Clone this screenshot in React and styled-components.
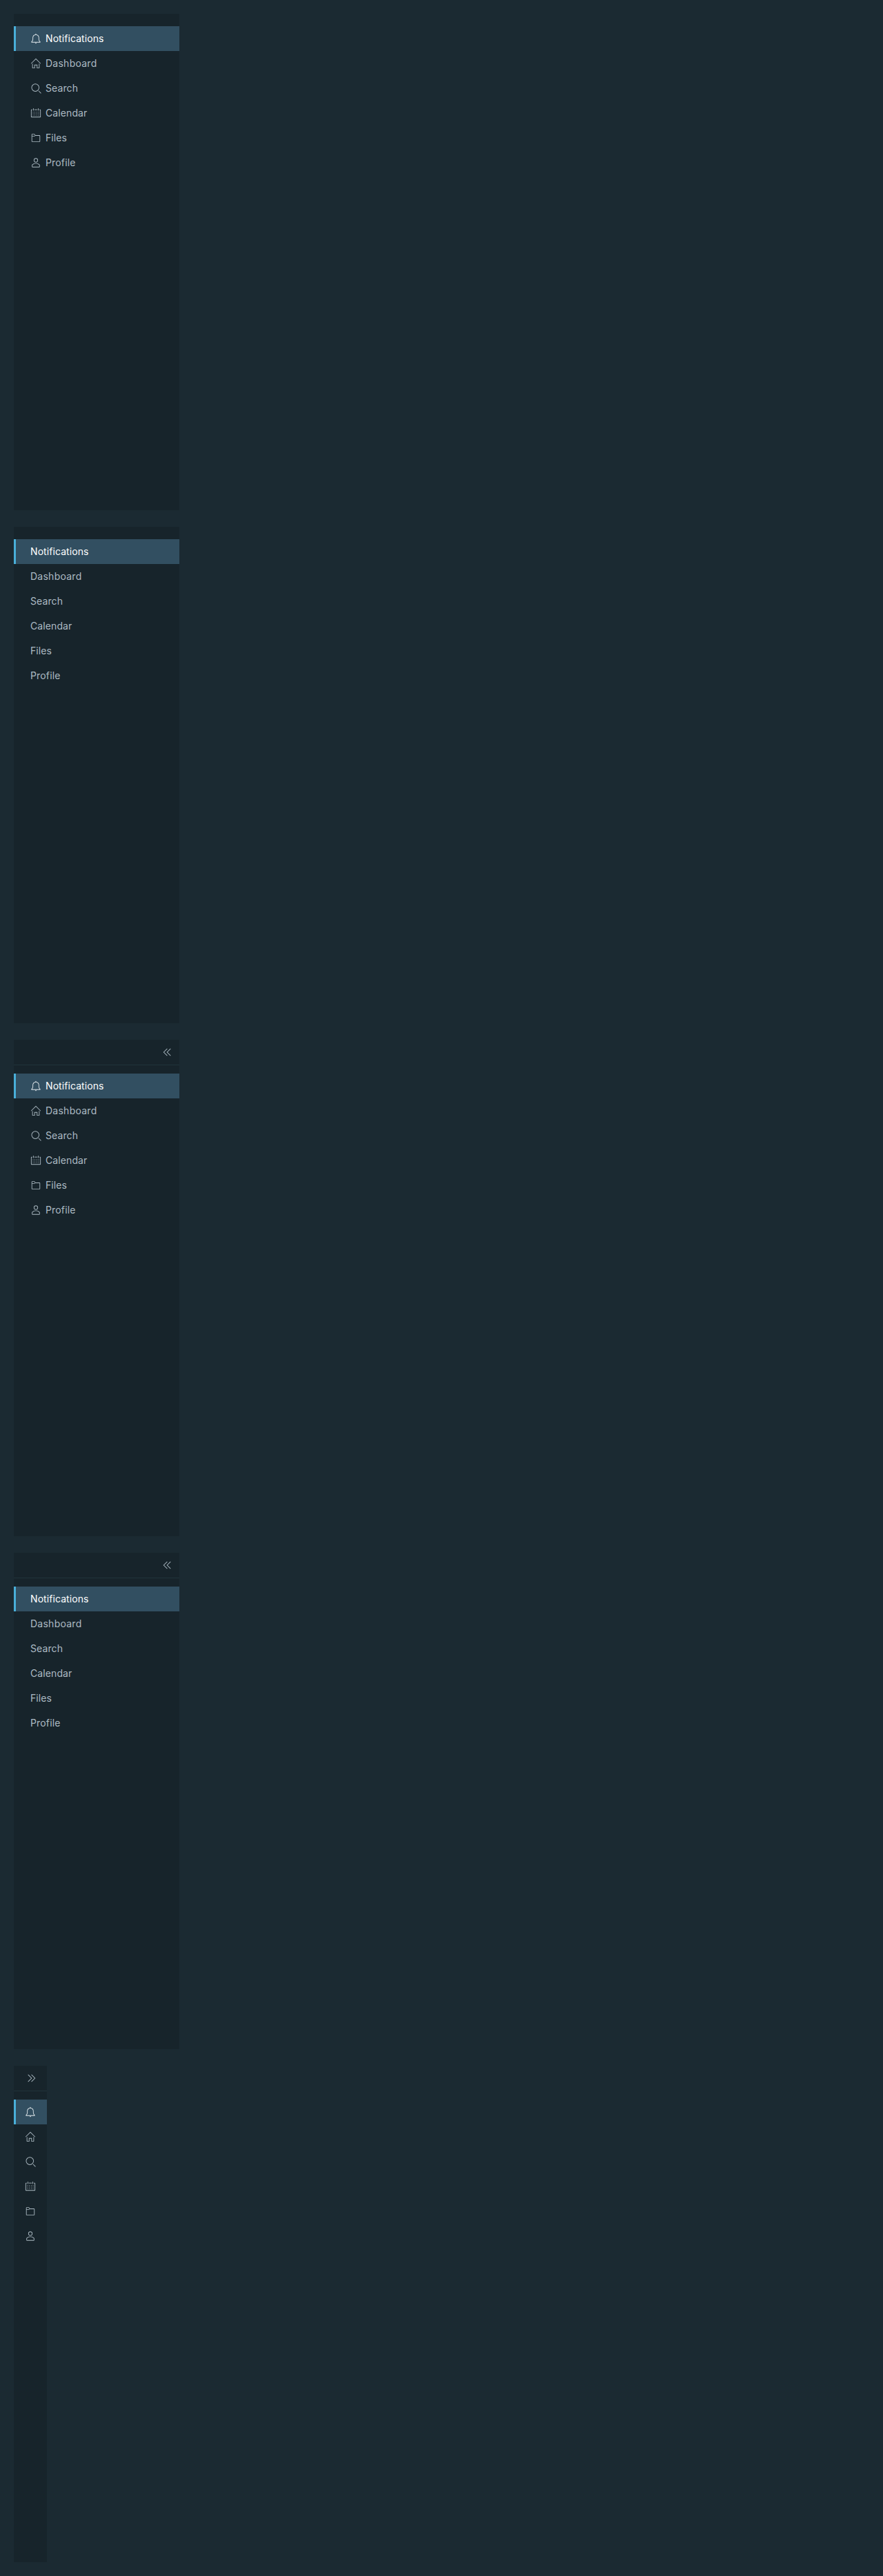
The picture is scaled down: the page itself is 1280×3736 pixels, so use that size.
import React from "react";
import styled, { createGlobalStyle } from "styled-components";

const GlobalStyle = createGlobalStyle`
  body {
    margin: 0;
    background: #1b2a32;
    font-family: Inter, "Open Sans", sans-serif;
  }
`;

const Page = styled.main`
  display: flex;
  flex-direction: column;
  align-items: flex-start;
  gap: 24px;
  padding: 20px;
`;

const Nav = styled.nav`
  box-sizing: border-box;
  display: flex;
  flex-direction: column;
  width: ${(p) => (p.$collapsed ? 48 : 240)}px;
  height: 720px;
  background: #17242b;
`;

const Trigger = styled.button`
  box-sizing: border-box;
  display: flex;
  align-items: center;
  justify-content: flex-end;
  flex: none;
  height: 37px;
  margin: 0;
  padding: 0 ${(p) => (p.$collapsed ? 14 : 10)}px 0 0;
  border: 0;
  border-bottom: 1px solid #21333b;
  background: transparent;
  color: #adbbc4;
`;

const List = styled.ul`
  list-style: none;
  margin: 0;
  padding: ${(p) => (p.$collapsible ? 12 : 18)}px 0 0;
`;

const Item = styled.li`
  box-sizing: border-box;
  display: flex;
  align-items: center;
  gap: 6px;
  height: 36px;
  padding-left: ${(p) => (p.$collapsed ? 13 : 21)}px;
  border-left: 3px solid ${(p) => (p.$active ? "#49afd9" : "transparent")};
  background: ${(p) => (p.$active ? "#324f61" : "transparent")};
  color: ${(p) => (p.$active ? "#ffffff" : "#adbbc4")};
`;

const Label = styled.span`
  font-size: 14px;
  font-weight: 400;
  line-height: 24px;
  letter-spacing: ${(p) => p.$tracking}px;
  white-space: nowrap;
`;

const Icon = styled.svg`
  display: block;
  flex: none;
  width: 16px;
  height: 16px;
  fill: ${(p) => (p.$active ? "#e3eaee" : "currentColor")};
  transform: rotate(${(p) => p.$turn || 0}deg);
`;

const shapes = {
  bell: (
    <>
      <path d="M32.51,27.83A14.4,14.4,0,0,1,30,24.9a12.63,12.63,0,0,1-1.35-4.81V15.15A10.81,10.81,0,0,0,19.21,4.4V3.11a1.33,1.33,0,1,0-2.67,0V4.42A10.81,10.81,0,0,0,7.21,15.15v4.94A12.63,12.63,0,0,1,5.86,24.9a14.4,14.4,0,0,1-2.47,2.93,1,1,0,0,0-.34.75v1.36a1,1,0,0,0,1,1h27.8a1,1,0,0,0,1-1V28.58A1,1,0,0,0,32.51,27.83ZM5.13,28.94a16.17,16.17,0,0,0,2.44-3,14.24,14.24,0,0,0,1.65-5.85V15.15a8.74,8.74,0,1,1,17.47,0v4.94a14.24,14.24,0,0,0,1.65,5.85,16.17,16.17,0,0,0,2.44,3Z" />
      <path d="M18,34.28A2.67,2.67,0,0,0,20.58,32H15.32A2.67,2.67,0,0,0,18,34.28Z" />
    </>
  ),
  home: (
    <>
      <path d="M33.71,17.29l-15-15a1,1,0,0,0-1.41,0l-15,15a1,1,0,0,0,1.41,1.41L18,4.41,32.29,18.71a1,1,0,0,0,1.41-1.41Z" />
      <path d="M28,32h-5V22H13V32H8V18L6,20V32a2,2,0,0,0,2,2h7V24h6V34h7a2,2,0,0,0,2-2V19.76l-2-2Z" />
    </>
  ),
  search: (
    <>
      <path d="M16.33,5.05A10.95,10.95,0,1,1,5.39,16,11,11,0,0,1,16.33,5.05m0-2.05a13,13,0,1,0,13,13,13,13,0,0,0-13-13Z" />
      <path d="M35,33.29l-7.37-7.42-1.42,1.41,7.37,7.42A1,1,0,1,0,35,33.29Z" />
    </>
  ),
  calendar: (
    <>
      <path d="M32.25,6H29V8h3V30H4V8H7V6H3.75A1.78,1.78,0,0,0,2,7.81V30.19A1.78,1.78,0,0,0,3.75,32h28.5A1.78,1.78,0,0,0,34,30.19V7.81A1.78,1.78,0,0,0,32.25,6Z" />
      {[14, 19, 24].map((y) =>
        [8, 14, 20, 26].map((x) => <rect key={`${x}-${y}`} x={x} y={y} width="2" height="2" />)
      )}
      <path d="M10,10a1,1,0,0,0,1-1V3A1,1,0,0,0,9,3V9A1,1,0,0,0,10,10Z" />
      <path d="M26,10a1,1,0,0,0,1-1V3a1,1,0,0,0-2,0V9A1,1,0,0,0,26,10Z" />
      <rect x="13" y="6" width="10" height="2" />
    </>
  ),
  folder: (
    <path d="M30,9H16.42L14.11,5.82A2,2,0,0,0,12.49,5H6A2,2,0,0,0,4,7V29a2,2,0,0,0,2,2H30a2,2,0,0,0,2-2V11A2,2,0,0,0,30,9Zm0,20H6V13h7.31a2,2,0,0,0,2-2H6V7h6.49l2.61,3.59a1,1,0,0,0,.81.41H30Z" />
  ),
  user: (
    <>
      <path d="M18,17a7,7,0,1,0-7-7A7,7,0,0,0,18,17ZM18,5a5,5,0,1,1-5,5A5,5,0,0,1,18,5Z" />
      <path d="M30.47,24.37a17.16,17.16,0,0,0-24.93,0A2,2,0,0,0,5,25.74V31a2,2,0,0,0,2,2H29a2,2,0,0,0,2-2V25.74A2,2,0,0,0,30.47,24.37ZM29,31H7V25.73a15.17,15.17,0,0,1,22,0h0Z" />
    </>
  ),
  angles: (
    <>
      <path d="M29,19.41a1,1,0,0,1-.71-.29L18,8.83,7.71,19.12a1,1,0,0,1-1.41-1.41L18,6,29.71,17.71A1,1,0,0,1,29,19.41Z" />
      <path d="M29,30.41a1,1,0,0,1-.71-.29L18,19.83,7.71,30.12a1,1,0,0,1-1.41-1.41L18,17,29.71,28.71A1,1,0,0,1,29,30.41Z" />
    </>
  ),
};

const Glyph = ({ name, turn, active }) => (
  <Icon viewBox="0 0 36 36" aria-hidden="true" $turn={turn} $active={active}>
    {shapes[name]}
  </Icon>
);

const items = [
  { label: "Notifications", icon: "bell", tracking: 0.08, active: true },
  { label: "Dashboard", icon: "home", tracking: 0.25 },
  { label: "Search", icon: "search", tracking: 0.1 },
  { label: "Calendar", icon: "calendar", tracking: 0.1 },
  { label: "Files", icon: "folder", tracking: 0.1 },
  { label: "Profile", icon: "user", tracking: 0.15 },
];

const SideNav = ({ icons, collapsible, collapsed }) => (
  <Nav $collapsed={collapsed}>
    {collapsible && (
      <Trigger $collapsed={collapsed}>
        <Glyph name="angles" turn={collapsed ? 90 : -90} />
      </Trigger>
    )}
    <List $collapsible={collapsible}>
      {items.map((item) => (
        <Item key={item.label} $active={item.active} $collapsed={collapsed}>
          {icons && <Glyph name={item.icon} active={item.active} />}
          {!collapsed && <Label $tracking={item.tracking}>{item.label}</Label>}
        </Item>
      ))}
    </List>
  </Nav>
);

export default function App() {
  return (
    <>
      <GlobalStyle />
      <Page>
        <SideNav icons />
        <SideNav />
        <SideNav icons collapsible />
        <SideNav collapsible />
        <SideNav icons collapsible collapsed />
      </Page>
    </>
  );
}
